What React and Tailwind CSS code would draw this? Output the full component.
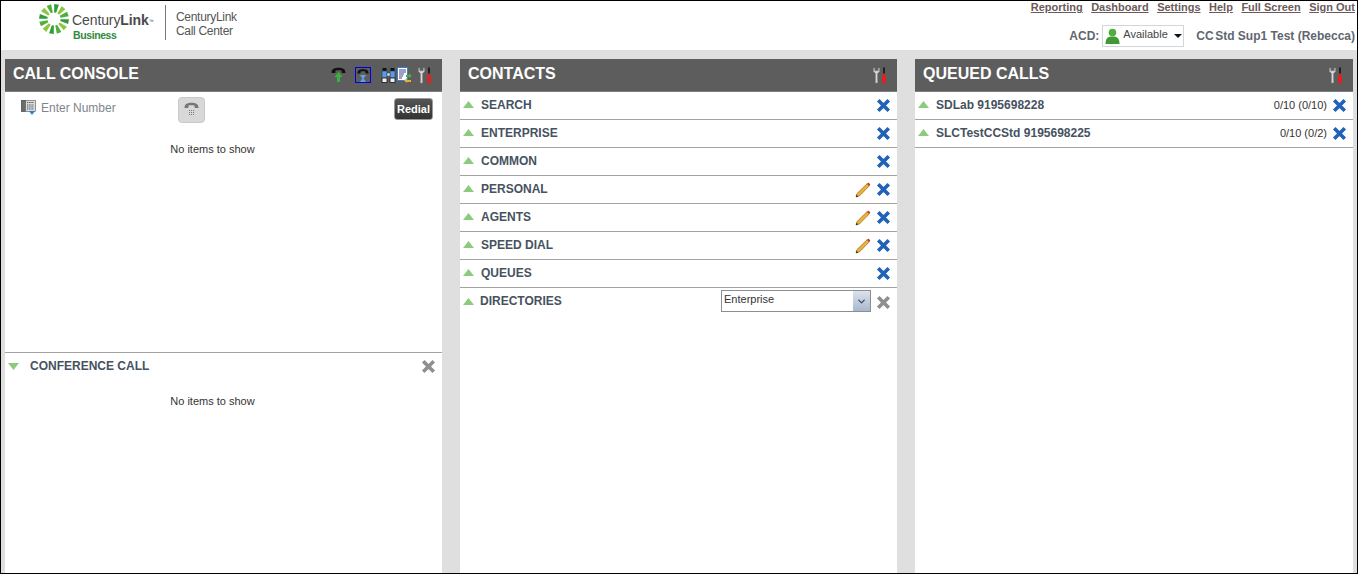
import { ChevronDown } from 'lucide-react';

const font = { fontFamily: '"Liberation Sans", Arial, sans-serif' };

const CloseIcon = ({ gray }) => (
  <svg width="15" height="15" viewBox="0 0 15 15" className="shrink-0">
    <path d="M3.5 3.5 L11.5 11.5 M11.5 3.5 L3.5 11.5" stroke={gray ? '#8f8f8f' : '#1f62b8'} strokeWidth="3.6" strokeLinecap="square" />
  </svg>
);

const Pencil = () => (
  <svg width="16" height="16" viewBox="0 0 16 16" className="shrink-0">
    <path d="M1 15 L2 11.5 L12 1.8 L14.2 4 L4.4 14 Z" fill="#e8b23c" stroke="#9a6c1c" strokeWidth="0.7" />
    <path d="M12 1.8 L13.4 0.6 L15.4 2.6 L14.2 4 Z" fill="#c43a3a" />
    <path d="M1 15 L1.6 12.8 L3.2 14.4 Z" fill="#222" />
  </svg>
);

const Tools = () => (
  <svg width="15" height="17" viewBox="0 0 15 17" className="shrink-0">
    <path d="M1.5 1 L1.5 4.5 L3.5 6.5 L3.5 16 L5.5 16 L5.5 6.5 L7.5 4.5 L7.5 1 L6.3 1 L6.3 3.8 L2.7 3.8 L2.7 1 Z" fill="#d6d6d6" stroke="#8a8a8a" strokeWidth="0.5" />
    <rect x="11" y="0.5" width="2" height="6" fill="#222" />
    <rect x="10" y="7" width="4" height="9.5" rx="1" fill="#d9252a" />
  </svg>
);

const Arrow = ({ down }) => (
  <svg width="11" height="7" viewBox="0 0 11 7" className={down ? 'shrink-0' : '-mt-[2px] shrink-0'}>
    <path d={down ? 'M0 0 H11 L5.5 7 Z' : 'M0 7 H11 L5.5 0 Z'} fill="#8ccb7e" />
  </svg>
);

const Handset = ({ color = '#111', w = 15 }) => (
  <svg width={w} height="7" viewBox="0 0 15 7">
    <path d="M0.5 6 C0.5 1.5 4 0.8 7.5 0.8 C11 0.8 14.5 1.5 14.5 6 L10.8 6 L10.4 3.6 C9 3 6 3 4.6 3.6 L4.2 6 Z" fill={color} />
  </svg>
);

const Sunburst = () => (
  <svg width="30" height="30" viewBox="-15 -15 30 30" className="shrink-0">
    {[...Array(12).keys()].map((i) => (
      <path
        key={i}
        d="M-2.4 -14.8 L2.4 -14.8 L1 -6.5 L-1 -6.5 Z"
        fill={i % 3 === 0 ? '#2f9e3a' : i % 3 === 1 ? '#8cc63f' : '#4fae3c'}
        transform={`rotate(${i * 30 + 10})`}
      />
    ))}
  </svg>
);

const PanelHeader = ({ title, children }) => (
  <div className="flex h-[33px] items-center justify-between border-b border-[#7f7f7f] bg-[#5d5d5d] pl-2 pr-[10px]">
    <span className="-mt-[2px] text-[16px] font-bold text-white">{title}</span>
    <div className="flex items-center">{children}</div>
  </div>
);

const Row = ({ label, edit }) => (
  <div className="flex h-[28px] items-center border-b border-[#a3a3a3] pl-[3px] pr-[6px]">
    <Arrow />
    <span className="-mt-[2px] ml-[7px] flex-1 text-[12px] font-bold text-[#46525f]">{label}</span>
    {edit && <span className="mr-[5px]"><Pencil /></span>}
    <CloseIcon />
  </div>
);

const contacts = [
  { label: 'SEARCH' },
  { label: 'ENTERPRISE' },
  { label: 'COMMON' },
  { label: 'PERSONAL', edit: true },
  { label: 'AGENTS', edit: true },
  { label: 'SPEED DIAL', edit: true },
  { label: 'QUEUES' },
];

const queues = [
  { name: 'SDLab 9195698228', count: '0/10 (0/10)' },
  { name: 'SLCTestCCStd 9195698225', count: '0/10 (0/2)' },
];

const links = ['Reporting', 'Dashboard', 'Settings', 'Help', 'Full Screen', 'Sign Out'];

export default function App() {
  return (
    <div style={font} className="flex h-[574px] w-[1358px] flex-col overflow-hidden border border-black bg-[#dfdfdf]">
      {/* Top bar */}
      <div className="flex h-[49px] shrink-0 justify-between bg-white">
        <div className="flex pl-[38px] pt-[3px]">
          <Sunburst />
          <div className="ml-[3px] flex w-[78px] flex-col items-start pt-[9px]">
            <span className="whitespace-nowrap text-[14px] leading-[15px] tracking-[-0.1px] text-[#4a4a4a]">
              Century<span className="font-bold">Link</span><sup className="text-[5px]">™</sup>
            </span>
            <span className="ml-px mt-px text-[10.5px] font-bold leading-[12px] tracking-[-0.4px] text-[#2f8a3a]">Business</span>
          </div>
          <div className="ml-[15px] mt-[1px] h-[35px] w-px bg-[#777]" />
          <div className="ml-[10px] pt-[6px] text-[12px] leading-[14px] tracking-[-0.3px] text-[#555]">
            <div>CenturyLink</div>
            <div>Call Center</div>
          </div>
        </div>
        <div className="flex flex-col items-end pr-[2px]">
          <div className="flex gap-[8.5px] text-[11px] font-bold leading-[13px] text-[#6b5a5a]">
            {links.map((l) => (
              <a key={l} className="underline">{l}</a>
            ))}
          </div>
          <div className="mt-[11px] flex items-center text-[12px] font-bold text-[#5f6670]">
            <span>ACD:</span>
            <div className="ml-[3px] flex h-[22px] w-[82px] items-center border border-[#cfd6dc] pl-[2px]">
              <svg width="15" height="17" viewBox="0 0 15 17" className="shrink-0">
                <circle cx="7.5" cy="4.5" r="3.8" fill="#4fae3c" />
                <path d="M0.5 16 C0.5 10 3 8.5 7.5 8.5 C12 8.5 14.5 10 14.5 16 Z" fill="#3f9a33" />
              </svg>
              <span className="ml-[3px] -mt-[3px] text-[11px] font-normal text-[#444]">Available</span>
              <svg width="8" height="4" viewBox="0 0 8 4" className="ml-[6px]"><path d="M0 0 H8 L4 4 Z" fill="#111" /></svg>
            </div>
            <span className="ml-[12px]">CC<span className="ml-[1.5px]">Std</span> Sup1 Test (Rebecca)</span>
          </div>
        </div>
      </div>

      {/* Panels */}
      <div className="grid min-h-0 flex-1 grid-cols-[437px_437px_438px] gap-[18px] pl-[4px] pt-[9px]">
        <section className="flex flex-col bg-white">
          <PanelHeader title="CALL CONSOLE">
            <div className="flex items-center">
              <svg width="15" height="16" viewBox="0 0 15 16">
                <path d="M0.5 6 C0.5 1.5 4 0.8 7.5 0.8 C11 0.8 14.5 1.5 14.5 6 L10.8 6 L10.4 3.6 C9 3 6 3 4.6 3.6 L4.2 6 Z" fill="#111" />
                <path d="M7.5 5 L11.5 10 H9 V15 H6 V10 H3.5 Z" fill="#38b23a" />
              </svg>
              <div className="ml-[9px] flex h-[16px] w-[16px] flex-col items-center border border-[#0000e0]">
                <Handset w={12} />
                <svg width="6" height="7" viewBox="0 0 6 7"><path d="M0 0 H6 L3.6 3.5 L6 7 H0 L2.4 3.5 Z" fill="#5ea3e8" /></svg>
              </div>
              <svg width="15" height="16" viewBox="0 0 15 16" className="ml-[10px]">
                <path d="M1.5 4 V1 H5.5 V4 Z M9.5 4 V1 H13.5 V4 Z" fill="#111" />
                <path d="M1 4 H6 V11 H1 Z M9 4 H14 V11 H9 Z" fill="#5c9be0" stroke="#1d3f73" strokeWidth="0.6" />
                <path d="M6 6 H9 V9 H6 Z" fill="#e8e8e8" stroke="#333" strokeWidth="0.5" />
                <path d="M1 11 H6 V15.5 H1 Z M9 11 H14 V15.5 H9 Z" fill="#f0f0f0" stroke="#111" strokeWidth="0.8" />
              </svg>
              <svg width="15" height="16" viewBox="0 0 15 16" className="ml-[1px]">
                <rect x="0.5" y="0.5" width="10" height="13" fill="#fff" stroke="#3b7ed0" />
                <path d="M2 3 H9 M2 5 H9 M2 7 H7 M2 9 H6 M2 11 H5" stroke="#2a2a7a" strokeWidth="0.9" />
                <path d="M9 8 H12 V6 L15 9 L12 11 V10 H9 Z" fill="#4cae3c" />
                <path d="M14 13 H10 V11 L7 13.5 L10 16 V15 H14 Z" fill="#e4b13a" />
              </svg>
              <span className="ml-[5px]"><Tools /></span>
            </div>
          </PanelHeader>
          <div className="flex h-[261px] flex-col border-b border-[#a3a3a3]">
            <div className="flex items-start pl-[16px] pr-[9px] pt-[5px]">
              <svg width="15" height="15" viewBox="0 0 15 15" className="mt-[3px] shrink-0">
                <rect x="0.5" y="0.5" width="4" height="11" fill="#6b6b6b" stroke="#333" strokeWidth="0.6" />
                <rect x="4.5" y="0.5" width="10" height="11" fill="#dcdcdc" stroke="#555" strokeWidth="0.6" />
                <path d="M6 2.5 H13 M6 5 H13 M6 7 H13 M6 9 H13" stroke="#555" strokeWidth="1" strokeDasharray="1.4 0.8" />
                <path d="M8 11 H14 L11 15 Z" fill="#2a7fd8" />
              </svg>
              <span className="ml-[5px] mt-[4px] w-[137px] text-[12px] leading-[15px] text-[#80858c]">Enter Number</span>
              <div className="flex h-[26px] w-[27px] flex-col items-center rounded-[4px] border border-[#c9c9c9] bg-[#d8d8d8] pt-[4px]">
                <Handset color="#777" w={15} />
                <div className="mt-px grid grid-cols-3 gap-px">
                  {[...Array(9).keys()].map((i) => (
                    <span key={i} className="h-px w-px bg-[#777]" />
                  ))}
                </div>
              </div>
              <button className="ml-auto mt-[1px] h-[22px] w-[39px] rounded-[3px] border border-[#9a9a9a] bg-gradient-to-b from-[#555] to-[#333] text-[11px] font-bold text-white">
                Redial
              </button>
            </div>
            <p className="mt-[18px] pr-[22px] text-center text-[11px] text-[#333]">No items to show</p>
          </div>
          <div className="flex h-[26px] items-center pl-[3px] pr-[6px]">
            <Arrow down />
            <span className="ml-[11px] flex-1 text-[12px] font-bold text-[#46525f]">CONFERENCE CALL</span>
            <CloseIcon gray />
          </div>
          <p className="mt-[14px] pr-[22px] text-center text-[11px] text-[#333]">No items to show</p>
        </section>

        <section className="flex flex-col bg-white">
          <PanelHeader title="CONTACTS"><Tools /></PanelHeader>
          {contacts.map((c) => (
            <Row key={c.label} label={c.label} edit={c.edit} />
          ))}
          <div className="flex h-[28px] items-center pl-[3px] pr-[6px]">
            <Arrow />
            <span className="-mt-[2px] ml-[6px] flex-1 text-[12px] font-bold text-[#46525f]">DIRECTORIES</span>
            <div className="-mt-[2px] flex h-[22px] w-[150px] border border-[#8a8f96]">
              <span className="flex-1 pl-[2px] text-[11px] leading-[17px] text-[#333]">Enterprise</span>
              <div className="flex w-[17px] items-center justify-center bg-gradient-to-b from-[#dbe3ee] to-[#a9b8cc]">
                <ChevronDown size={11} strokeWidth={3} color="#3d4a63" />
              </div>
            </div>
            <span className="ml-[5px]"><CloseIcon gray /></span>
          </div>
        </section>

        <section className="flex flex-col bg-white">
          <PanelHeader title="QUEUED CALLS"><Tools /></PanelHeader>
          {queues.map((q) => (
            <div key={q.name} className="flex h-[28px] items-center border-b border-[#a3a3a3] pl-[3px] pr-[6px]">
              <Arrow />
              <span className="-mt-[2px] ml-[7px] flex-1 text-[12px] font-bold text-[#46525f]">{q.name}</span>
              <span className="mr-[5px] text-[11px] text-[#333]">{q.count}</span>
              <CloseIcon />
            </div>
          ))}
        </section>
      </div>
    </div>
  );
}
